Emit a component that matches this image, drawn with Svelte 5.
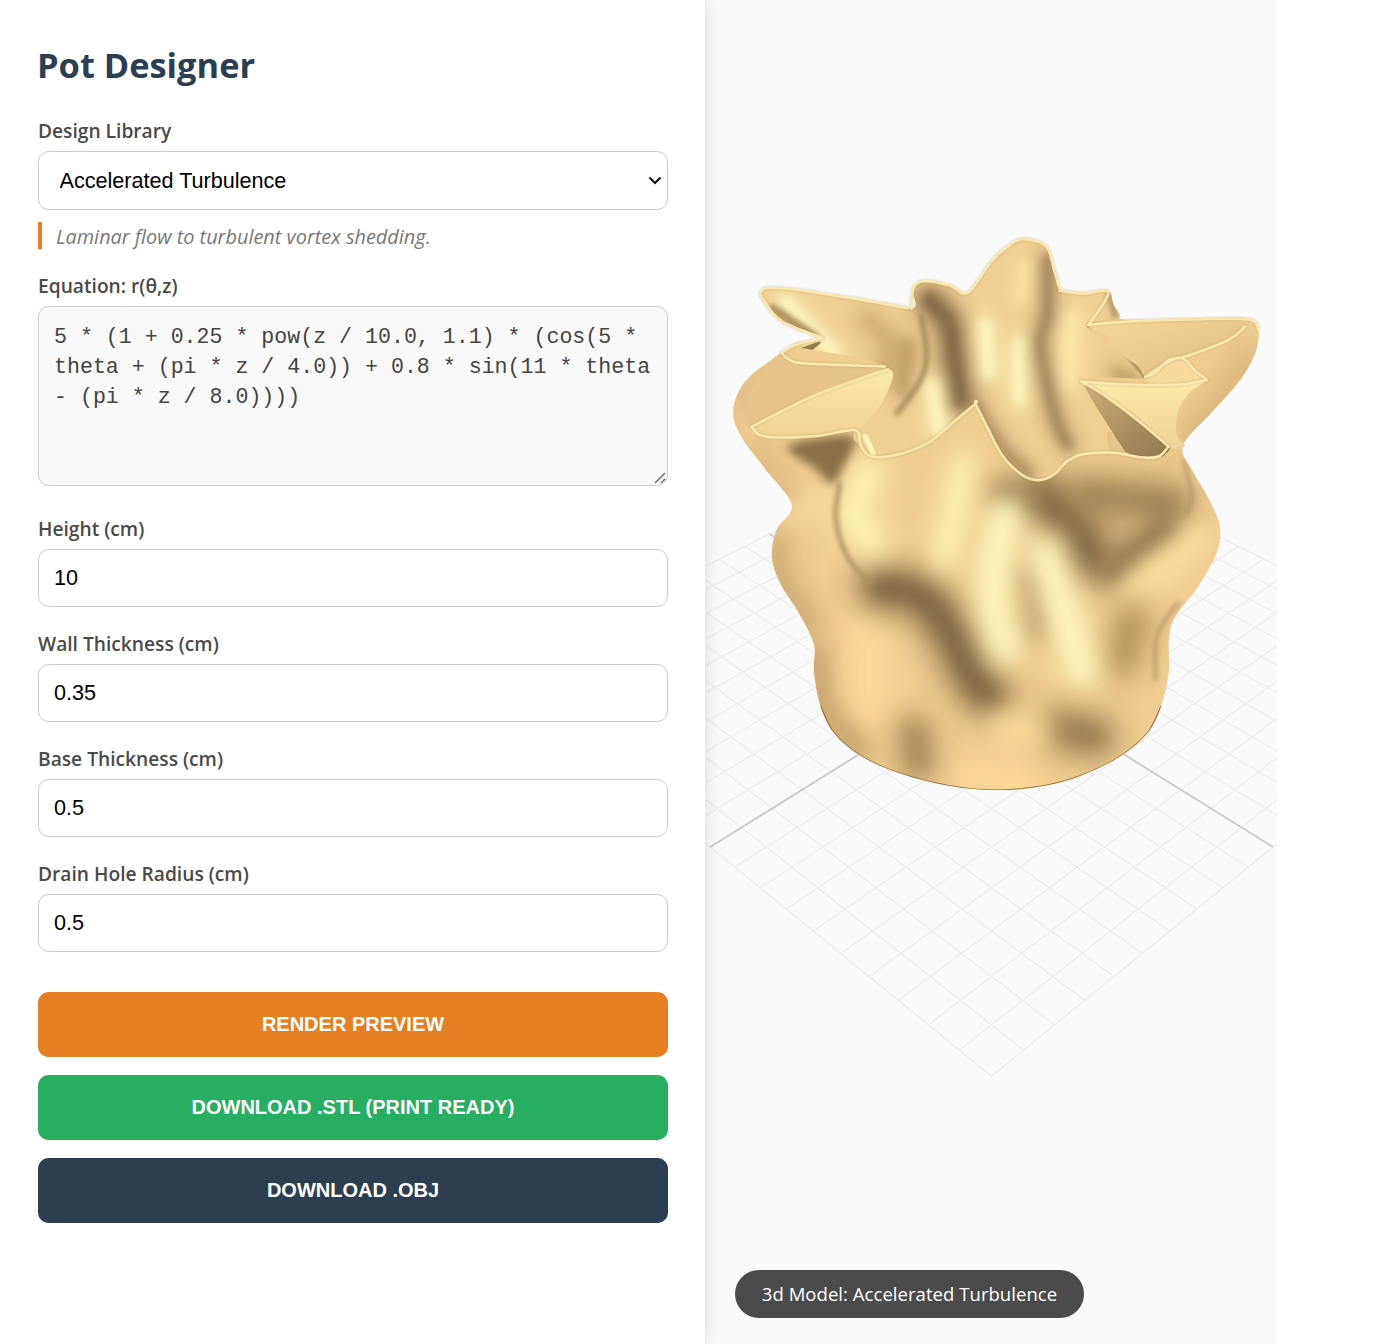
<script>
  const fields = [
    { label: 'Height (cm)', value: '10' },
    { label: 'Wall Thickness (cm)', value: '0.35' },
    { label: 'Base Thickness (cm)', value: '0.5' },
    { label: 'Drain Hole Radius (cm)', value: '0.5' }
  ];
  const equation = '5 * (1 + 0.25 * pow(z / 10.0, 1.1) * (cos(5 * theta + (pi * z / 4.0)) + 0.8 * sin(11 * theta - (pi * z / 8.0))))';

  const project = (u, v) => {
    const w = 1 - 0.118 * (u + v);
    return [991.5 + (248.3 * (u - v)) / w, 672 + (154.4 * (u + v)) / w];
  };
  const gridLines = [];
  for (let i = -10; i <= 10; i++) {
    const t = i / 10;
    gridLines.push({ a: project(t, -1), b: project(t, 1), center: i === 0 });
    gridLines.push({ a: project(-1, t), b: project(1, t), center: i === 0 });
  }

  function sm(p, closed = false) {
    const n = p.length;
    const at = (i) => (closed ? p[(i + n) % n] : p[Math.max(0, Math.min(n - 1, i))]);
    let d = `M${p[0][0]} ${p[0][1]}`;
    const end = closed ? n : n - 1;
    for (let i = 0; i < end; i++) {
      const a = at(i - 1), b = at(i), c = at(i + 1), e = at(i + 2);
      d += `C${b[0] + (c[0] - a[0]) / 6} ${b[1] + (c[1] - a[1]) / 6} ${c[0] - (e[0] - b[0]) / 6} ${c[1] - (e[1] - b[1]) / 6} ${c[0]} ${c[1]}`;
    }
    return d + (closed ? 'Z' : '');
  }

  const sil = [[850,50],[905,70],[925,130],[940,180],[1000,190],[1065,185],[1080,220],[1095,258],[1250,258],[1400,255],[1440,262],[1460,290],[1450,350],[1410,420],[1340,500],[1262,590],[1290,660],[1330,730],[1358,800],[1350,870],[1300,960],[1240,1040],[1225,1100],[1225,1180],[1205,1270],[1170,1340],[1100,1400],[1000,1450],[900,1478],[780,1490],[650,1478],[520,1445],[420,1400],[350,1340],[315,1270],[298,1180],[298,1110],[260,1030],[210,950],[188,880],[200,810],[240,745],[170,650],[110,570],[87,510],[100,450],[140,400],[210,350],[250,325],[322,309],[322,309],[280,290],[210,260],[160,205],[175,178],[250,182],[400,205],[553,232],[555,180],[585,160],[650,168],[700,190],[760,110],[810,65]];

  const frontRim = [[135,540],[170,566],[300,565],[405,549],[420,590],[450,618],[520,612],[600,580],[660,530],[720,480],[720,480],[750,540],[790,615],[840,665],[885,680],[925,665],[960,630],[1000,612],[1080,608],[1150,620],[1198,618],[1224,592]];

  const interior = [[322,309],[280,290],[210,260],[160,205],[175,178],[250,182],[400,205],[553,232],[555,180],[585,160],[650,168],[700,190],[760,110],[810,65],[850,50],[905,70],[925,130],[940,180],[1000,190],[1065,185],[1080,220],[1095,258],[1015,274],[1100,350],[1170,410],[1000,422],[1120,540],[1215,610],[1150,620],[1080,608],[1000,612],[960,630],[925,665],[885,680],[840,665],[790,615],[750,540],[720,480],[720,480],[660,530],[600,580],[520,612],[450,618],[420,590],[405,549],[490,390],[250,330]];

  const bodyStrokes = [
    { p: [[430,1080],[430,1290]], c: '#fcd998', w: 150 },
    { p: [[470,960],[570,980],[650,1070],[710,1190],[760,1250]], c: '#745c3d', w: 110 },
    { p: [[900,730],[980,800],[1020,880]], c: '#7c6243', w: 120 },
    { p: [[1020,720],[1230,740]], c: '#a08256', w: 110 },
    { p: [[1230,800],[1130,870],[1075,930]], c: '#7a6141', w: 60 },
    { p: [[1300,820],[1225,905],[1130,965]], c: '#fde2a2', w: 70 },
    { p: [[1130,1050],[1100,1150]], c: '#b5935f', w: 100 },
    { p: [[780,710],[890,720]], c: '#957a50', w: 60 },
    { p: [[440,665],[400,770],[450,840]], c: '#fff6b8', w: 90 },
    { p: [[690,640],[665,760],[640,880]], c: '#fff6b8', w: 70 },
    { p: [[860,920],[880,1080]], c: '#b18f5e', w: 55 },
    { p: [[800,770],[770,900],[770,1020],[800,1120]], c: '#fffbc4', w: 85 },
    { p: [[900,870],[950,1020],[1000,1180]], c: '#fffac2', w: 90 },
    { p: [[200,830],[210,930],[290,1060]], c: '#c5a16d', w: 50 },
    { p: [[250,770],[330,720]], c: '#f9dc9e', w: 60 },
    { p: [[305,1130],[320,1270],[420,1390]], c: '#b99663', w: 55 },
    { p: [[940,1330],[1030,1350]], c: '#957750', w: 110 },
    { p: [[560,1340],[570,1420]], c: '#a38254', w: 90 },
    { p: [[800,1330],[860,1340]], c: '#f9d897', w: 110 },
    { p: [[700,1450],[860,1475]], c: '#ffdb98', w: 70 },
    { p: [[1440,350],[1360,470],[1270,580]], c: '#cfac76', w: 44 },
    { p: [[95,500],[125,450],[190,390]], c: '#d3b07a', w: 30 },
    { p: [[150,600],[230,720]], c: '#d0ad77', w: 34 }
  ];
  const bodyLines = [
    { p: [[1250,1000],[1195,1085],[1190,1200]], c: '#b4966a', w: 9, b: 's' },
    { p: [[365,690],[355,780],[385,880],[445,950]], c: '#ad8f62', w: 12, b: 's' },
    { p: [[1265,630],[1285,720],[1270,770]], c: '#ae9064', w: 8, b: 's' }
  ];

  const shadowUnderEar = [[230,590],[400,565],[372,650],[345,690],[300,650]];

  const innerStrokes = [
    { p: [[440,260],[500,330],[480,380]], c: '#d4b17a', w: 80 },
    { p: [[540,330],[530,440]], c: '#bf9c69', w: 70 },
    { p: [[222,210],[283,279],[352,348]], c: '#fffbc4', w: 56 },
    { p: [[600,210],[650,270],[665,360],[680,470]], c: '#7f6544', w: 90 },
    { p: [[605,430],[625,550]], c: '#fffac2', w: 60 },
    { p: [[745,270],[755,400]], c: '#fffbc4', w: 56 },
    { p: [[835,320],[835,470]], c: '#fffbc4', w: 56 },
    { p: [[850,120],[840,200]], c: '#fde2a3', w: 56 },
    { p: [[970,260],[960,420]], c: '#fee8a9', w: 80 },
    { p: [[908,100],[908,244],[890,331],[928,514],[963,592]], c: '#8f7550', w: 42 },
    { p: [[720,490],[790,600],[860,665]], c: '#a5845a', w: 46 },
    { p: [[1090,400],[1140,430]], c: '#bd9a66', w: 56 }
  ];
  const innerLines = [
    { p: [[190,232],[300,305]], c: '#b1905f', w: 24, b: 's' },
    { p: [[578,250],[592,350],[575,420],[515,505]], c: '#a3875c', w: 13, b: 's' },
    { p: [[1015,276],[1100,340],[1170,420]], c: '#8f7550', w: 5, b: 'x' },
    { p: [[1070,195],[1085,250]], c: '#b39464', w: 16, b: 's' }
  ];

  const rims = [
    [[157,192],[175,178],[250,182],[400,205],[545,230]],
    [[157,195],[210,262],[322,309]],
    [[322,309],[250,326],[213,348]],
    [[213,348],[250,372],[350,378],[483,383]],
    [[135,540],[300,458],[492,390]],
    frontRim,
    [[553,232],[558,178],[585,160],[650,170],[700,190],[760,110],[810,65],[850,50],[905,70],[925,130],[940,180]],
    [[940,185],[1000,192],[1065,186],[1050,225],[1015,274]],
    [[1015,274],[1119,265],[1280,260],[1433,260],[1459,287]],
    [[1424,279],[1381,313],[1267,357],[1224,366],[1189,400],[1163,410]],
    [[1163,410],[1250,360],[1295,395],[1325,418]],
    [[997,422],[1120,430],[1250,430],[1325,418]],
    [[997,422],[1060,460],[1140,520],[1224,592]]
  ];
</script>

<div class="page">
  <aside class="sidebar">
    <h1>Pot Designer</h1>

    <label class="lbl" for="lib">Design Library</label>
    <div class="selwrap">
      <select id="lib" class="ctl sel">
        <option>Accelerated Turbulence</option>
      </select>
      <svg class="chev" viewBox="0 0 14 9" aria-hidden="true"><path d="M1.5 1.5 7 7l5.5-5.5" fill="none" stroke="#111" stroke-width="2" /></svg>
    </div>
    <p class="hint">Laminar flow to turbulent vortex shedding.</p>

    <label class="lbl" for="eq">Equation: r(θ,z)</label>
    <div class="eqwrap">
      <textarea id="eq" class="eq" value={equation} spellcheck="false"></textarea>
      <svg class="grip" viewBox="0 0 12 12" aria-hidden="true"><path d="M1 11 11 1M7 11l4-4" fill="none" stroke="#666" stroke-width="1.4" /></svg>
    </div>

    {#each fields as f, i}
      <label class="lbl" for={'f' + i}>{f.label}</label>
      <input id={'f' + i} class="ctl num" type="number" value={f.value} />
    {/each}

    <div class="actions">
      <button class="btn orange">RENDER PREVIEW</button>
      <button class="btn green">DOWNLOAD .STL (PRINT READY)</button>
      <button class="btn navy">DOWNLOAD .OBJ</button>
    </div>
  </aside>

  <main class="viewer">
    <svg class="scene" viewBox="705 0 572 1344" aria-hidden="true">
      <defs>
        <filter id="bx" filterUnits="userSpaceOnUse" x="0" y="0" width="1700" height="1700"><feGaussianBlur stdDeviation="2.5" /></filter>
        <filter id="bs" filterUnits="userSpaceOnUse" x="0" y="0" width="1700" height="1700"><feGaussianBlur stdDeviation="7" /></filter>
        <filter id="bk" filterUnits="userSpaceOnUse" x="0" y="0" width="1700" height="1700"><feGaussianBlur stdDeviation="13" /></filter>
        <filter id="bm" filterUnits="userSpaceOnUse" x="0" y="0" width="1700" height="1700"><feGaussianBlur stdDeviation="24" /></filter>
        <filter id="bl" filterUnits="userSpaceOnUse" x="0" y="0" width="1700" height="1700"><feGaussianBlur stdDeviation="36" /></filter>
        <filter id="br" filterUnits="userSpaceOnUse" x="0" y="0" width="1700" height="1700"><feGaussianBlur stdDeviation="1.3" /></filter>
        <clipPath id="cSil"><path d={sm(sil, true)} /></clipPath>
        <clipPath id="cInt"><path d={sm(interior, true)} /></clipPath>
        <linearGradient id="earA" x1="0" y1="0" x2="0" y2="1"><stop offset="0" stop-color="#fdeaab" /><stop offset="1" stop-color="#f1d195" /></linearGradient>
        <linearGradient id="earB" x1="0" y1="0" x2="1" y2="1"><stop offset="0" stop-color="#f6d89b" /><stop offset="1" stop-color="#dfbc84" /></linearGradient>
        <linearGradient id="pocket" x1="0" y1="0" x2="1" y2="1"><stop offset="0" stop-color="#d1af7a" /><stop offset="1" stop-color="#8f7550" /></linearGradient>
      </defs>

      <g fill="none">
        {#each gridLines as l}
          {#if !l.center}
            <line x1={l.a[0]} y1={l.a[1]} x2={l.b[0]} y2={l.b[1]} stroke="#ececec" stroke-width="1.2" />
          {/if}
        {/each}
        {#each gridLines as l}
          {#if l.center}
            <line x1={l.a[0]} y1={l.a[1]} x2={l.b[0]} y2={l.b[1]} stroke="#c6c6c6" stroke-width="1.6" />
          {/if}
        {/each}
      </g>

      <g transform="translate(700 220) scale(.3827)">
        <path d={sm(sil, true)} fill="#f0cd91" />
        <g clip-path="url(#cSil)" fill="none" stroke-linecap="round" stroke-linejoin="round">
          {#each bodyStrokes as s}
            <path d={sm(s.p)} stroke={s.c} stroke-width={s.w * 1.25} filter="url(#bl)" opacity=".62" />
            <path d={sm(s.p)} stroke={s.c} stroke-width={s.w * 0.5} filter="url(#bm)" opacity=".8" />
          {/each}
          {#each bodyLines as s}
            <path d={sm(s.p)} stroke={s.c} stroke-width={s.w} filter={'url(#b' + s.b + ')'} />
          {/each}
          <path d={sm(shadowUnderEar, true)} fill="#8b7049" filter="url(#bk)" />
          <path d={sm([[315,1270],[350,1340],[420,1400],[520,1445],[650,1478],[780,1490],[900,1478],[1000,1450],[1100,1400],[1170,1340],[1205,1270]])} stroke="#94733f" stroke-width="4" filter="url(#br)" />
        </g>

        <path d={sm(interior, true)} fill="#f0cf94" />
        <g clip-path="url(#cInt)" fill="none" stroke-linecap="round" stroke-linejoin="round">
          {#each innerStrokes as s}
            <path d={sm(s.p)} stroke={s.c} stroke-width={s.w} filter="url(#bm)" opacity=".65" />
            <path d={sm(s.p)} stroke={s.c} stroke-width={s.w * 0.45} filter="url(#bk)" opacity=".8" />
          {/each}
          {#each innerLines as s}
            <path d={sm(s.p)} stroke={s.c} stroke-width={s.w} filter={'url(#b' + s.b + ')'} />
          {/each}
          <path d={sm([[250,340],[315,318],[285,345],[250,350]], true)} fill="#9a7d52" filter="url(#br)" />
          <path d={sm([[432,565],[452,610]])} stroke="#fff3b5" stroke-width="14" filter="url(#br)" />
        </g>

        <!-- left ear -->
        <path d={sm([[213,348],[250,372],[350,378],[483,383],[300,450],[150,535],[120,500],[160,400]], true)} fill="#e8c58b" />
        <path d={sm([[135,540],[300,460],[492,390],[480,470],[440,520],[405,549],[300,565],[170,566]], true)} fill="url(#earA)" />
        <!-- far right ear -->
        <path d={sm([[1015,274],[1119,265],[1280,260],[1420,268],[1418,288],[1381,313],[1267,357],[1224,366],[1189,400],[1163,410],[1137,366],[1067,305]], true)} fill="url(#earB)" />
        <path d={sm([[1163,410],[1250,360],[1295,395],[1325,418],[1200,430]], true)} fill="#f7da9c" />
        <!-- right front ear -->
        <path d={sm([[1000,424],[1120,430],[1250,430],[1320,420],[1280,450],[1250,500],[1245,560],[1267,590],[1224,592],[1140,510],[1050,460]], true)} fill="url(#earA)" />
        <path d={sm([[1005,430],[1080,480],[1160,540],[1224,590],[1215,612],[1198,618],[1119,610],[1075,550]], true)} fill="url(#pocket)" />
        <path d={sm([[1067,550],[1110,605],[1085,608],[1068,600]], true)} fill="#e6c48c" />

        <g fill="none" stroke-linecap="round" stroke-linejoin="round">
          {#each rims as r}
            <path d={sm(r)} stroke="#8f7550" stroke-width="10" opacity=".22" filter="url(#bx)" />
          {/each}
          {#each rims as r}
            <path d={sm(r)} stroke="#fbe8ac" stroke-width="6.5" filter="url(#br)" />
          {/each}
        </g>
      </g>
    </svg>

    <div class="badge">3d Model: Accelerated Turbulence</div>
  </main>
</div>

<style>
  :global(body) {
    margin: 0;
    background: #fff;
  }
  .page {
    display: flex;
    width: 1277px;
    height: 1344px;
    overflow: hidden;
    font-family: "Open Sans", "Noto Sans", sans-serif;
  }
  .sidebar {
    box-sizing: border-box;
    position: relative;
    z-index: 2;
    flex: 0 0 705px;
    padding: 42px 37px 0 38px;
    background: #fff;
    box-shadow: 2px 0 14px rgba(0, 0, 0, 0.11);
  }
  h1 {
    margin: 0 0 30px -1px;
    height: 46px;
    font-size: 34.4px;
    line-height: 46px;
    font-weight: 700;
    color: #2c3e50;
  }
  .lbl {
    display: block;
    height: 27px;
    margin: 0 0 6px;
    font-size: 19.2px;
    line-height: 25px;
    font-weight: 600;
    color: #4a4a4a;
  }
  .ctl {
    display: block;
    box-sizing: border-box;
    width: 630px;
    border: 1px solid #ccc;
    border-radius: 10.8px;
    background: #fff;
    color: #000;
    font-family: "Liberation Sans", Arial, sans-serif;
    font-size: 21.6px;
  }
  .selwrap,
  .eqwrap {
    position: relative;
    width: 630px;
  }
  .sel {
    height: 59px;
    padding: 0 30px 0 20.5px;
    appearance: none;
  }
  .chev {
    position: absolute;
    right: 6px;
    top: 25px;
    width: 14px;
    height: 9px;
    pointer-events: none;
  }
  .num {
    height: 58px;
    padding: 0 15px;
    margin-bottom: 24px;
    outline: none;
  }
  .hint {
    margin: 12px 0 24px;
    height: 27px;
    padding-left: 14px;
    border-left: 4px solid #e67e22;
    font-size: 19.9px;
    line-height: 30px;
    font-style: italic;
    color: #777;
  }
  .eq {
    display: block;
    box-sizing: border-box;
    width: 630px;
    height: 180px;
    margin: 0 0 30px;
    padding: 15px;
    border: 1px solid #ccc;
    border-radius: 10.8px;
    background: #f9f9f9;
    color: #444;
    font-family: "Liberation Mono", "Courier New", monospace;
    font-size: 21.6px;
    line-height: 30px;
    outline: none;
    resize: none;
  }
  .grip {
    position: absolute;
    right: 2px;
    top: 166px;
    width: 12px;
    height: 12px;
    pointer-events: none;
  }
  .actions {
    display: flex;
    flex-direction: column;
    gap: 18px;
    margin-top: 40px;
    width: 630px;
  }
  .btn {
    height: 65px;
    border: 0;
    border-radius: 10.8px;
    color: #fff;
    font-family: "Liberation Sans", Arial, sans-serif;
    font-size: 20px;
    font-weight: 700;
  }
  .orange { background: #e67e22; }
  .green { background: #27ae60; }
  .navy { background: #2c3e50; }
  .viewer {
    position: relative;
    flex: 0 0 572px;
    height: 1344px;
    background: #fafafa;
  }
  .scene {
    position: absolute;
    inset: 0;
    width: 572px;
    height: 1344px;
  }
  .badge {
    position: absolute;
    left: 30px;
    top: 1270px;
    box-sizing: border-box;
    width: 349px;
    height: 48px;
    border-radius: 24px;
    background: #4b4b4b;
    color: #fff;
    font-size: 18.5px;
    letter-spacing: 0.05px;
    line-height: 48px;
    text-align: center;
    white-space: nowrap;
  }
</style>
